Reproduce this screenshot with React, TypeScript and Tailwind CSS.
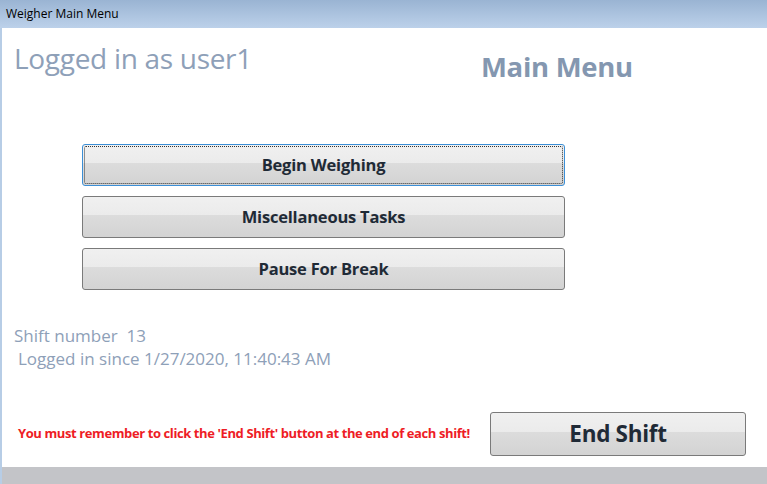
const font = { fontFamily: '"Open Sans", "Noto Sans", sans-serif' };

function MenuButton({ label, focused }: { label: string; focused?: boolean }) {
  return (
    <button
      className={`relative h-[42px] w-[483px] rounded-[3px] border bg-[linear-gradient(#f0f0f0_0%,#ebebeb_45%,#dcdcdc_46%,#d3d3d3_100%)] text-[16.5px] font-bold tracking-[-0.2px] text-[#1f2a36] ${
        focused ? "border-[#3c8fd6]" : "border-[#7a7a7a]"
      }`}
    >
      {focused && (
        <span className="pointer-events-none absolute inset-[1px] rounded-[2px] border border-dotted border-[#333]" />
      )}
      {label}
    </button>
  );
}

export default function App() {
  return (
    <div className="flex h-[484px] w-[767px] flex-col bg-white" style={font}>
      <div className="flex h-[28px] items-center bg-[linear-gradient(#9ab4d3,#bcd1ea)] pl-[6px] text-[12px] text-black">
        Weigher Main Menu
      </div>

      <div className="flex flex-1 flex-col border-l-2 border-[#b7cde6]">
        <div className="flex items-start">
          <h1 className="ml-[12px] mt-[11px] text-[28px] leading-[38px] tracking-[-0.3px] text-[#8ea0b8]">
            Logged in as user1
          </h1>
          <h2 className="ml-[229px] mt-[20px] text-[27.5px] font-bold leading-[38px] tracking-[-0.3px] text-[#8497b0]">
            Main Menu
          </h2>
        </div>

        <div className="ml-[80px] mt-[58px] flex flex-col gap-[10px]">
          <MenuButton label="Begin Weighing" focused />
          <MenuButton label="Miscellaneous Tasks" />
          <MenuButton label="Pause For Break" />
        </div>

        <div className="ml-[12px] mt-[34px] text-[17px] leading-[23px] text-[#8ea0b8]">
          <p>Shift number&nbsp; 13</p>
          <p className="pl-[4px]">Logged in since 1/27/2020, 11:40:43 AM</p>
        </div>

        <div className="mt-[42px] flex items-center">
          <p className="ml-[16px] w-[472px] text-[13px] font-bold tracking-[-0.4px] text-[#ee1c25]">
            You must remember to click the 'End Shift' button at the end of each shift!
          </p>
          <button className="h-[44px] w-[256px] rounded-[3px] border border-[#7a7a7a] bg-[linear-gradient(#f0f0f0_0%,#ebebeb_45%,#dcdcdc_46%,#d3d3d3_100%)] text-[22.5px] font-bold tracking-[-0.3px] text-[#1f2a36]">
            End Shift
          </button>
        </div>

        <div className="mt-auto h-[17px] bg-[#c3c4c8]" />
      </div>
    </div>
  );
}
